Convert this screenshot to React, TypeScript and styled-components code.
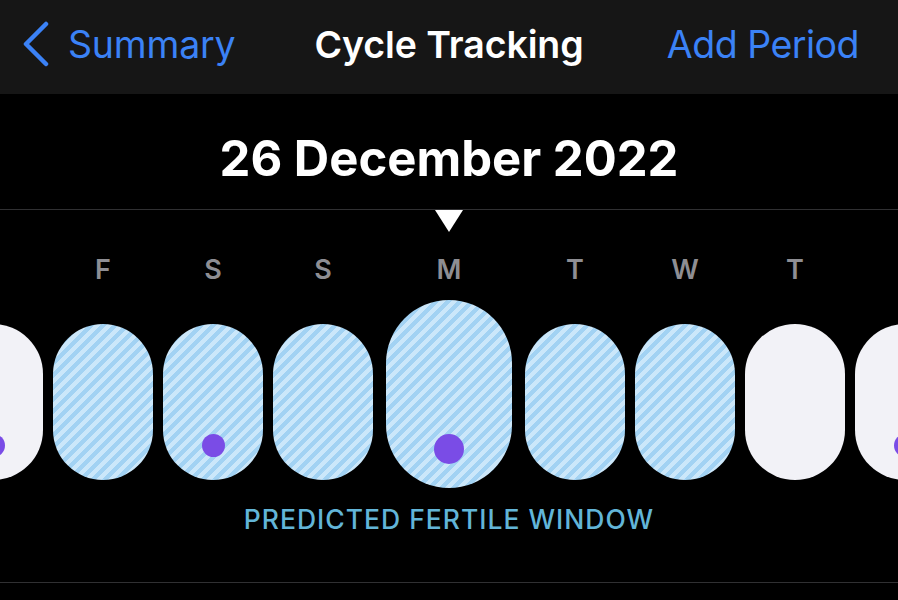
import styled, { createGlobalStyle } from "styled-components";

const GlobalStyle = createGlobalStyle`
  html, body {
    margin: 0;
    padding: 0;
    background: #000000;
    font-family: Inter, "Noto Sans", "Liberation Sans", sans-serif;
  }
`;

const Screen = styled.div`
  width: 898px;
  height: 600px;
  overflow: hidden;
  background: #000000;
  display: flex;
  flex-direction: column;
`;

const NavBar = styled.div`
  height: 94px;
  background: #161616;
  display: grid;
  grid-template-columns: 1fr auto 1fr;
  align-items: center;
  padding: 0 39px 6px 39px;
  box-sizing: border-box;
`;

const BackButton = styled.div`
  display: flex;
  align-items: center;
  gap: 18px;
  margin-left: -17px;
  color: #3b82f6;
  font-size: 37.5px;
  letter-spacing: -0.2px;
`;

const NavTitle = styled.div`
  color: #ffffff;
  font-size: 37.5px;
  font-weight: 600;
  letter-spacing: -0.1px;
`;

const NavAction = styled.div`
  justify-self: end;
  color: #3b82f6;
  font-size: 37.5px;
  letter-spacing: -0.5px;
`;

const DateHeading = styled.div`
  height: 116px;
  padding-top: 14px;
  display: flex;
  align-items: center;
  justify-content: center;
  color: #ffffff;
  font-size: 49px;
  font-weight: 700;
  border-bottom: 1px solid #303032;
  box-sizing: border-box;
`;

const Pointer = styled.div`
  align-self: center;
  width: 0;
  height: 0;
  border-left: 14px solid transparent;
  border-right: 14px solid transparent;
  border-top: 22px solid #ffffff;
`;

const DayStrip = styled.div`
  display: flex;
  justify-content: center;
  gap: 10px;
  margin-top: 28px;
`;

const DayColumn = styled.div<{ $today?: boolean }>`
  flex: 0 0 ${(p) => (p.$today ? 126 : 100)}px;
  margin: 0 ${(p) => (p.$today ? 3 : 0)}px;
  display: flex;
  flex-direction: column;
  align-items: center;
`;

const DayLetter = styled.div`
  height: 20px;
  line-height: 20px;
  color: #8e8e93;
  font-size: 27px;
  font-weight: 600;
`;

const PillSlot = styled.div`
  height: 188px;
  margin-top: 20px;
  width: 100%;
  display: flex;
  align-items: flex-end;
`;

const Pill = styled.div<{ $fertile?: boolean; $today?: boolean }>`
  width: 100%;
  height: ${(p) => (p.$today ? 188 : 156)}px;
  margin-bottom: ${(p) => (p.$today ? 0 : 8)}px;
  border-radius: ${(p) => (p.$today ? 63 : 50)}px;
  background: ${(p) =>
    p.$fertile
      ? "repeating-linear-gradient(135deg, #a2d2f3 0px, #a2d2f3 4.5px, #cbe7fa 4.5px, #cbe7fa 8.5px)"
      : "#f2f2f7"};
  display: flex;
  flex-direction: column;
  justify-content: flex-end;
  align-items: center;
  padding-bottom: ${(p) => (p.$today ? 24 : 23)}px;
  box-sizing: border-box;
`;

const Dot = styled.div<{ $today?: boolean }>`
  width: ${(p) => (p.$today ? 30 : 23)}px;
  height: ${(p) => (p.$today ? 30 : 23)}px;
  border-radius: 50%;
  background: #7a4ce6;
`;

const WindowLabel = styled.div`
  margin-top: 21px;
  text-align: center;
  color: #62b5d8;
  font-size: 26.5px;
  font-weight: 500;
  letter-spacing: 1px;
  line-height: 20px;
`;

const BottomRule = styled.div`
  margin-top: 53px;
  border-top: 1px solid #303032;
`;

type Day = { letter: string; fertile?: boolean; dot?: boolean; today?: boolean };

const days: Day[] = [
  { letter: "T", dot: true },
  { letter: "F", fertile: true },
  { letter: "S", fertile: true, dot: true },
  { letter: "S", fertile: true },
  { letter: "M", fertile: true, dot: true, today: true },
  { letter: "T", fertile: true },
  { letter: "W", fertile: true },
  { letter: "T" },
  { letter: "F", dot: true },
];

const Chevron = () => (
  <svg width="28" height="46" viewBox="0 0 28 46" fill="none">
    <path
      d="M24 3 L4 23 L24 43"
      stroke="#3b82f6"
      strokeWidth="4.5"
      strokeLinecap="round"
      strokeLinejoin="round"
    />
  </svg>
);

export default function App() {
  return (
    <Screen>
      <GlobalStyle />
      <NavBar>
        <BackButton>
          <Chevron />
          Summary
        </BackButton>
        <NavTitle>Cycle Tracking</NavTitle>
        <NavAction>Add Period</NavAction>
      </NavBar>
      <DateHeading>26 December 2022</DateHeading>
      <Pointer />
      <DayStrip>
        {days.map((d, i) => (
          <DayColumn key={i} $today={d.today}>
            <DayLetter>{i === 0 || i === days.length - 1 ? "" : d.letter}</DayLetter>
            <PillSlot>
              <Pill $fertile={d.fertile} $today={d.today}>
                {d.dot && <Dot $today={d.today} />}
              </Pill>
            </PillSlot>
          </DayColumn>
        ))}
      </DayStrip>
      <WindowLabel>PREDICTED FERTILE WINDOW</WindowLabel>
      <BottomRule />
    </Screen>
  );
}
